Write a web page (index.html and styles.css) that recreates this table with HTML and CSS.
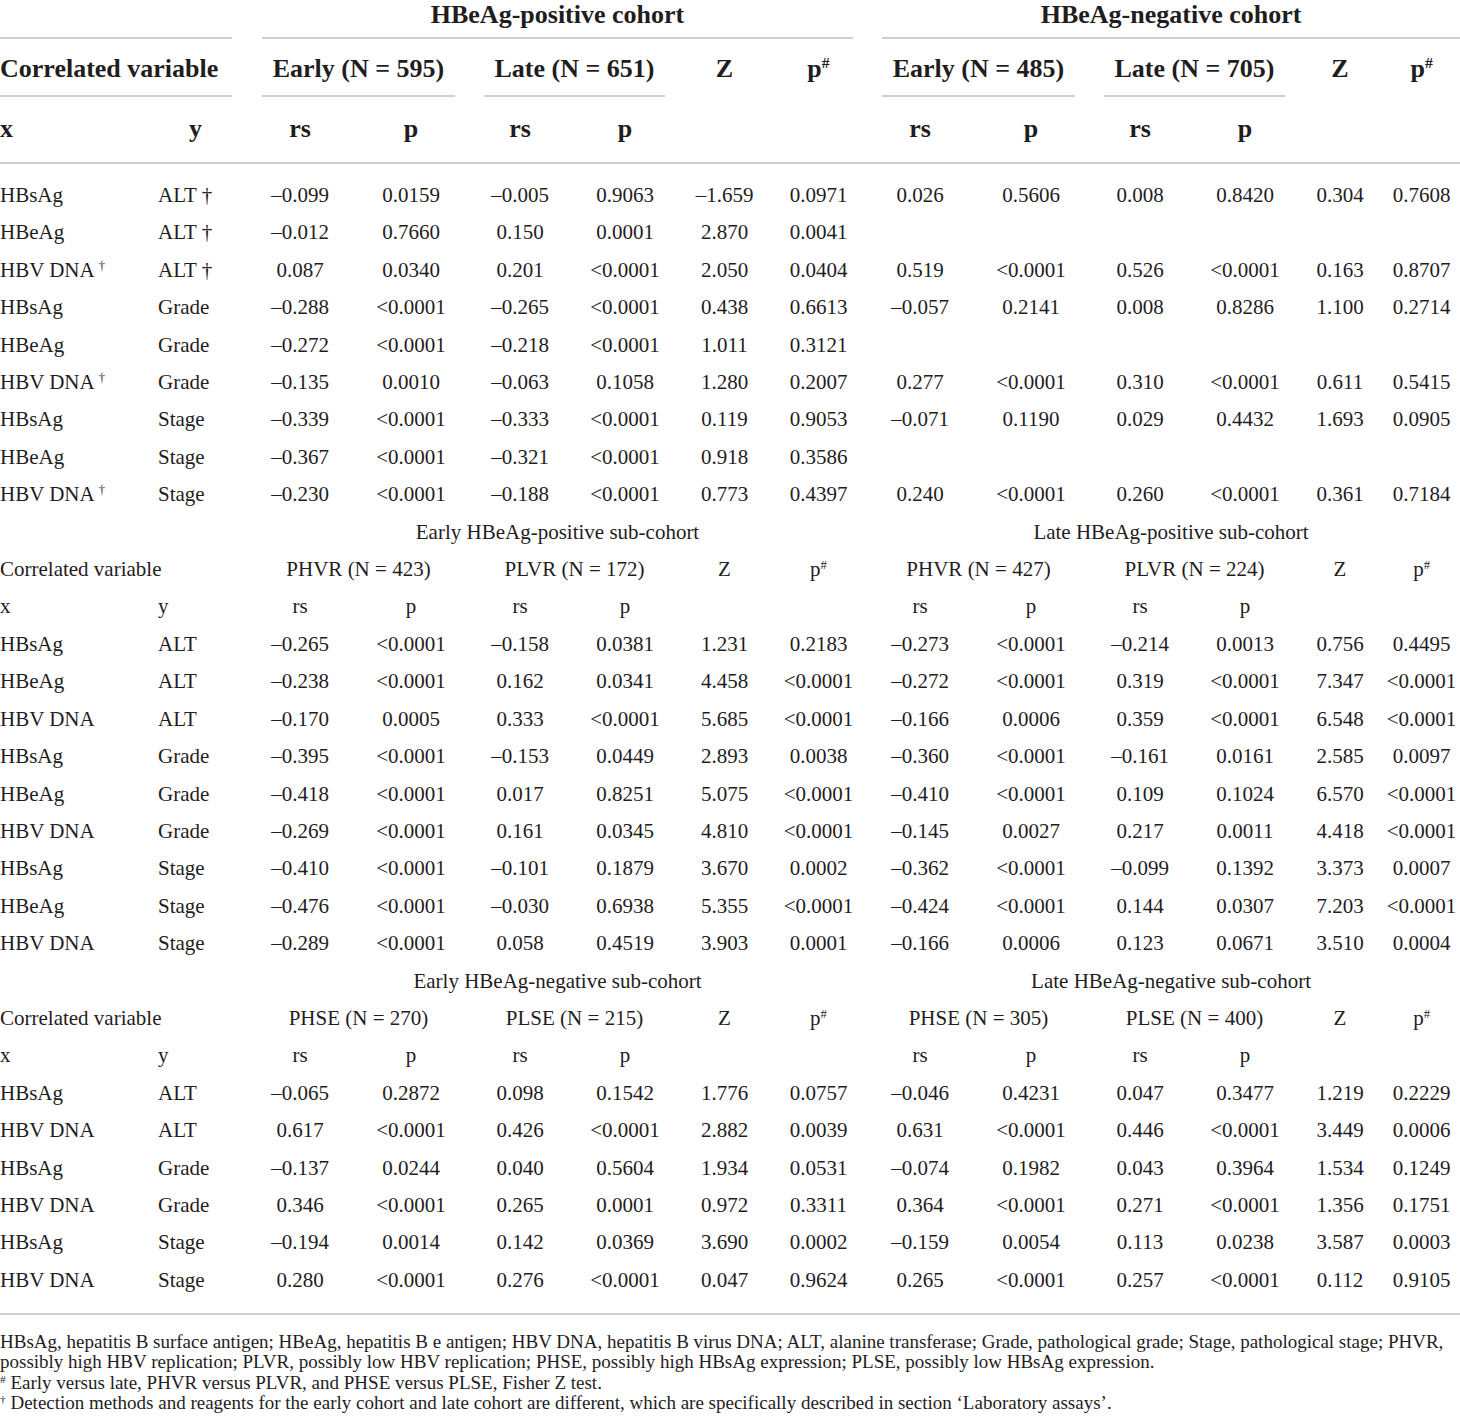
FILE: index.html
```html
<!DOCTYPE html>
<html lang="en">
<head>
<meta charset="utf-8">
<title>Correlation table</title>
<link rel="stylesheet" href="styles.css">
</head>
<body>
<table class="corr">
  <colgroup>
    <col class="c-x"><col class="c-y">
    <col class="c-rs"><col class="c-p"><col class="c-rs2"><col class="c-p2"><col class="c-z"><col class="c-ph">
    <col class="c-rs"><col class="c-p"><col class="c-rs2"><col class="c-p2"><col class="c-z2"><col class="c-ph2">
  </colgroup>
  <thead>
    <tr class="r1">
      <th colspan="2"><div class="cap ul first">&nbsp;</div></th>
      <th colspan="6"><div class="cap ul">HBeAg-positive cohort</div></th>
      <th colspan="6"><div class="cap ul last">HBeAg-negative cohort</div></th>
    </tr>
    <tr class="r2">
      <th colspan="2" class="left"><div class="cap ul first">Correlated variable</div></th>
      <th colspan="2"><div class="cap ul">Early (N = 595)</div></th>
      <th colspan="2"><div class="cap ul">Late (N = 651)</div></th>
      <th><div class="cap">Z</div></th>
      <th><div class="cap">p<sup>#</sup></div></th>
      <th colspan="2"><div class="cap ul">Early (N = 485)</div></th>
      <th colspan="2"><div class="cap ul">Late (N = 705)</div></th>
      <th><div class="cap">Z</div></th>
      <th><div class="cap">p<sup>#</sup></div></th>
    </tr>
    <tr class="r3">
      <th class="left">x</th><th class="yhead">y</th>
      <th>rs</th><th>p</th><th>rs</th><th>p</th><th></th><th></th>
      <th>rs</th><th>p</th><th>rs</th><th>p</th><th></th><th></th>
    </tr>
  </thead>
  <tbody class="main">
    <tr><td class="x">HBsAg</td><td class="y">ALT †</td><td>–0.099</td><td>0.0159</td><td>–0.005</td><td>0.9063</td><td>–1.659</td><td>0.0971</td><td>0.026</td><td>0.5606</td><td>0.008</td><td>0.8420</td><td>0.304</td><td>0.7608</td></tr>
    <tr><td class="x">HBeAg</td><td class="y">ALT †</td><td>–0.012</td><td>0.7660</td><td>0.150</td><td>0.0001</td><td>2.870</td><td>0.0041</td><td></td><td></td><td></td><td></td><td></td><td></td></tr>
    <tr><td class="x">HBV DNA <sup>†</sup></td><td class="y">ALT †</td><td>0.087</td><td>0.0340</td><td>0.201</td><td>&lt;0.0001</td><td>2.050</td><td>0.0404</td><td>0.519</td><td>&lt;0.0001</td><td>0.526</td><td>&lt;0.0001</td><td>0.163</td><td>0.8707</td></tr>
    <tr><td class="x">HBsAg</td><td class="y">Grade</td><td>–0.288</td><td>&lt;0.0001</td><td>–0.265</td><td>&lt;0.0001</td><td>0.438</td><td>0.6613</td><td>–0.057</td><td>0.2141</td><td>0.008</td><td>0.8286</td><td>1.100</td><td>0.2714</td></tr>
    <tr><td class="x">HBeAg</td><td class="y">Grade</td><td>–0.272</td><td>&lt;0.0001</td><td>–0.218</td><td>&lt;0.0001</td><td>1.011</td><td>0.3121</td><td></td><td></td><td></td><td></td><td></td><td></td></tr>
    <tr><td class="x">HBV DNA <sup>†</sup></td><td class="y">Grade</td><td>–0.135</td><td>0.0010</td><td>–0.063</td><td>0.1058</td><td>1.280</td><td>0.2007</td><td>0.277</td><td>&lt;0.0001</td><td>0.310</td><td>&lt;0.0001</td><td>0.611</td><td>0.5415</td></tr>
    <tr><td class="x">HBsAg</td><td class="y">Stage</td><td>–0.339</td><td>&lt;0.0001</td><td>–0.333</td><td>&lt;0.0001</td><td>0.119</td><td>0.9053</td><td>–0.071</td><td>0.1190</td><td>0.029</td><td>0.4432</td><td>1.693</td><td>0.0905</td></tr>
    <tr><td class="x">HBeAg</td><td class="y">Stage</td><td>–0.367</td><td>&lt;0.0001</td><td>–0.321</td><td>&lt;0.0001</td><td>0.918</td><td>0.3586</td><td></td><td></td><td></td><td></td><td></td><td></td></tr>
    <tr><td class="x">HBV DNA <sup>†</sup></td><td class="y">Stage</td><td>–0.230</td><td>&lt;0.0001</td><td>–0.188</td><td>&lt;0.0001</td><td>0.773</td><td>0.4397</td><td>0.240</td><td>&lt;0.0001</td><td>0.260</td><td>&lt;0.0001</td><td>0.361</td><td>0.7184</td></tr>
  </tbody>
  <tbody class="sub">
    <tr><td colspan="2"></td><td colspan="6" class="grp">Early HBeAg-positive sub-cohort</td><td colspan="6" class="grp last">Late HBeAg-positive sub-cohort</td></tr>
    <tr><td colspan="2" class="x">Correlated variable</td><td colspan="2" class="grp">PHVR (N = 423)</td><td colspan="2" class="grp">PLVR (N = 172)</td><td>Z</td><td>p<sup>#</sup></td><td colspan="2" class="grp">PHVR (N = 427)</td><td colspan="2" class="grp">PLVR (N = 224)</td><td>Z</td><td>p<sup>#</sup></td></tr>
    <tr><td class="x">x</td><td class="y">y</td><td>rs</td><td>p</td><td>rs</td><td>p</td><td></td><td></td><td>rs</td><td>p</td><td>rs</td><td>p</td><td></td><td></td></tr>
    <tr><td class="x">HBsAg</td><td class="y">ALT</td><td>–0.265</td><td>&lt;0.0001</td><td>–0.158</td><td>0.0381</td><td>1.231</td><td>0.2183</td><td>–0.273</td><td>&lt;0.0001</td><td>–0.214</td><td>0.0013</td><td>0.756</td><td>0.4495</td></tr>
    <tr><td class="x">HBeAg</td><td class="y">ALT</td><td>–0.238</td><td>&lt;0.0001</td><td>0.162</td><td>0.0341</td><td>4.458</td><td>&lt;0.0001</td><td>–0.272</td><td>&lt;0.0001</td><td>0.319</td><td>&lt;0.0001</td><td>7.347</td><td>&lt;0.0001</td></tr>
    <tr><td class="x">HBV DNA</td><td class="y">ALT</td><td>–0.170</td><td>0.0005</td><td>0.333</td><td>&lt;0.0001</td><td>5.685</td><td>&lt;0.0001</td><td>–0.166</td><td>0.0006</td><td>0.359</td><td>&lt;0.0001</td><td>6.548</td><td>&lt;0.0001</td></tr>
    <tr><td class="x">HBsAg</td><td class="y">Grade</td><td>–0.395</td><td>&lt;0.0001</td><td>–0.153</td><td>0.0449</td><td>2.893</td><td>0.0038</td><td>–0.360</td><td>&lt;0.0001</td><td>–0.161</td><td>0.0161</td><td>2.585</td><td>0.0097</td></tr>
    <tr><td class="x">HBeAg</td><td class="y">Grade</td><td>–0.418</td><td>&lt;0.0001</td><td>0.017</td><td>0.8251</td><td>5.075</td><td>&lt;0.0001</td><td>–0.410</td><td>&lt;0.0001</td><td>0.109</td><td>0.1024</td><td>6.570</td><td>&lt;0.0001</td></tr>
    <tr><td class="x">HBV DNA</td><td class="y">Grade</td><td>–0.269</td><td>&lt;0.0001</td><td>0.161</td><td>0.0345</td><td>4.810</td><td>&lt;0.0001</td><td>–0.145</td><td>0.0027</td><td>0.217</td><td>0.0011</td><td>4.418</td><td>&lt;0.0001</td></tr>
    <tr><td class="x">HBsAg</td><td class="y">Stage</td><td>–0.410</td><td>&lt;0.0001</td><td>–0.101</td><td>0.1879</td><td>3.670</td><td>0.0002</td><td>–0.362</td><td>&lt;0.0001</td><td>–0.099</td><td>0.1392</td><td>3.373</td><td>0.0007</td></tr>
    <tr><td class="x">HBeAg</td><td class="y">Stage</td><td>–0.476</td><td>&lt;0.0001</td><td>–0.030</td><td>0.6938</td><td>5.355</td><td>&lt;0.0001</td><td>–0.424</td><td>&lt;0.0001</td><td>0.144</td><td>0.0307</td><td>7.203</td><td>&lt;0.0001</td></tr>
    <tr><td class="x">HBV DNA</td><td class="y">Stage</td><td>–0.289</td><td>&lt;0.0001</td><td>0.058</td><td>0.4519</td><td>3.903</td><td>0.0001</td><td>–0.166</td><td>0.0006</td><td>0.123</td><td>0.0671</td><td>3.510</td><td>0.0004</td></tr>
  </tbody>
  <tbody class="sub end">
    <tr><td colspan="2"></td><td colspan="6" class="grp">Early HBeAg-negative sub-cohort</td><td colspan="6" class="grp last">Late HBeAg-negative sub-cohort</td></tr>
    <tr><td colspan="2" class="x">Correlated variable</td><td colspan="2" class="grp">PHSE (N = 270)</td><td colspan="2" class="grp">PLSE (N = 215)</td><td>Z</td><td>p<sup>#</sup></td><td colspan="2" class="grp">PHSE (N = 305)</td><td colspan="2" class="grp">PLSE (N = 400)</td><td>Z</td><td>p<sup>#</sup></td></tr>
    <tr><td class="x">x</td><td class="y">y</td><td>rs</td><td>p</td><td>rs</td><td>p</td><td></td><td></td><td>rs</td><td>p</td><td>rs</td><td>p</td><td></td><td></td></tr>
    <tr><td class="x">HBsAg</td><td class="y">ALT</td><td>–0.065</td><td>0.2872</td><td>0.098</td><td>0.1542</td><td>1.776</td><td>0.0757</td><td>–0.046</td><td>0.4231</td><td>0.047</td><td>0.3477</td><td>1.219</td><td>0.2229</td></tr>
    <tr><td class="x">HBV DNA</td><td class="y">ALT</td><td>0.617</td><td>&lt;0.0001</td><td>0.426</td><td>&lt;0.0001</td><td>2.882</td><td>0.0039</td><td>0.631</td><td>&lt;0.0001</td><td>0.446</td><td>&lt;0.0001</td><td>3.449</td><td>0.0006</td></tr>
    <tr><td class="x">HBsAg</td><td class="y">Grade</td><td>–0.137</td><td>0.0244</td><td>0.040</td><td>0.5604</td><td>1.934</td><td>0.0531</td><td>–0.074</td><td>0.1982</td><td>0.043</td><td>0.3964</td><td>1.534</td><td>0.1249</td></tr>
    <tr><td class="x">HBV DNA</td><td class="y">Grade</td><td>0.346</td><td>&lt;0.0001</td><td>0.265</td><td>0.0001</td><td>0.972</td><td>0.3311</td><td>0.364</td><td>&lt;0.0001</td><td>0.271</td><td>&lt;0.0001</td><td>1.356</td><td>0.1751</td></tr>
    <tr><td class="x">HBsAg</td><td class="y">Stage</td><td>–0.194</td><td>0.0014</td><td>0.142</td><td>0.0369</td><td>3.690</td><td>0.0002</td><td>–0.159</td><td>0.0054</td><td>0.113</td><td>0.0238</td><td>3.587</td><td>0.0003</td></tr>
    <tr><td class="x">HBV DNA</td><td class="y">Stage</td><td>0.280</td><td>&lt;0.0001</td><td>0.276</td><td>&lt;0.0001</td><td>0.047</td><td>0.9624</td><td>0.265</td><td>&lt;0.0001</td><td>0.257</td><td>&lt;0.0001</td><td>0.112</td><td>0.9105</td></tr>
  </tbody>
</table>
<div class="notes">
  <p>HBsAg, hepatitis B surface antigen; HBeAg, hepatitis B e antigen; HBV DNA, hepatitis B virus DNA; ALT, alanine transferase; Grade, pathological grade; Stage, pathological stage; PHVR, possibly high HBV replication; PLVR, possibly low HBV replication; PHSE, possibly high HBsAg expression; PLSE, possibly low HBsAg expression.</p>
  <p><sup>#</sup> Early versus late, PHVR versus PLVR, and PHSE versus PLSE, Fisher Z test.</p>
  <p><sup>†</sup> Detection methods and reagents for the early cohort and late cohort are different, which are specifically described in section ‘Laboratory assays’.</p>
</div>
</body>
</html>
```

FILE: styles.css
```css
body {
  margin: 0;
  font-family: "Liberation Serif", "Times New Roman", serif;
  color: #1f1d1e;
  background: #ffffff;
}

sup {
  font-size: 0.6em;
  line-height: 0;
  vertical-align: 0.55em;
}

.corr {
  width: 1460px;
  table-layout: fixed;
  border-collapse: separate;
  border-spacing: 0;
}

.c-x { width: 150px; }
.c-y { width: 95px; }
.c-rs { width: 110px; }
.c-p { width: 112px; }
.c-rs2 { width: 106px; }
.c-p2 { width: 104px; }
.c-z { width: 95px; }
.c-ph { width: 93px; }
.c-z2 { width: 86px; }
.c-ph2 { width: 77px; }

.corr th,
.corr td {
  padding: 0;
  text-align: center;
  white-space: nowrap;
  vertical-align: top;
}

/* header */
.corr thead th {
  font-weight: bold;
  font-size: 26px;
}

.cap {
  border-bottom: 2px solid transparent;
}

.cap.ul {
  border-bottom-color: #cfcfcf;
  margin: 0 12px 0 17px;
}

.cap.ul.first {
  margin: 0 13px 0 0;
}

.cap.ul.last {
  margin-right: 0;
}

.r1 .cap {
  line-height: 29px;
  padding-bottom: 8px;
}

.r2 th {
  padding-top: 8px;
}

.r2 .cap {
  line-height: 44px;
  padding-bottom: 4px;
}

.corr th.left {
  text-align: left;
}

.r3 th {
  padding-top: 3px;
  line-height: 58px;
  padding-bottom: 4px;
  border-bottom: 2px solid #cfcfcf;
}

.r3 th.yhead {
  padding-left: 8px;
  padding-right: 12px;
}

/* body */
.corr td {
  font-size: 21px;
  line-height: 37.4px;
}

.corr td.x {
  text-align: left;
}

.corr td.y {
  text-align: left;
  padding-left: 8px;
}

.corr td.grp {
  padding: 0 12px 0 17px;
}

.corr td.grp.last {
  padding-right: 0;
}

.main tr:first-child td {
  padding-top: 13px;
}

.end tr:last-child td {
  padding-bottom: 14px;
  border-bottom: 2px solid #cfcfcf;
}

/* notes */
.notes {
  margin-top: 17px;
  font-size: 19px;
  line-height: 20.3px;
}

.notes p {
  margin: 0;
}
```
